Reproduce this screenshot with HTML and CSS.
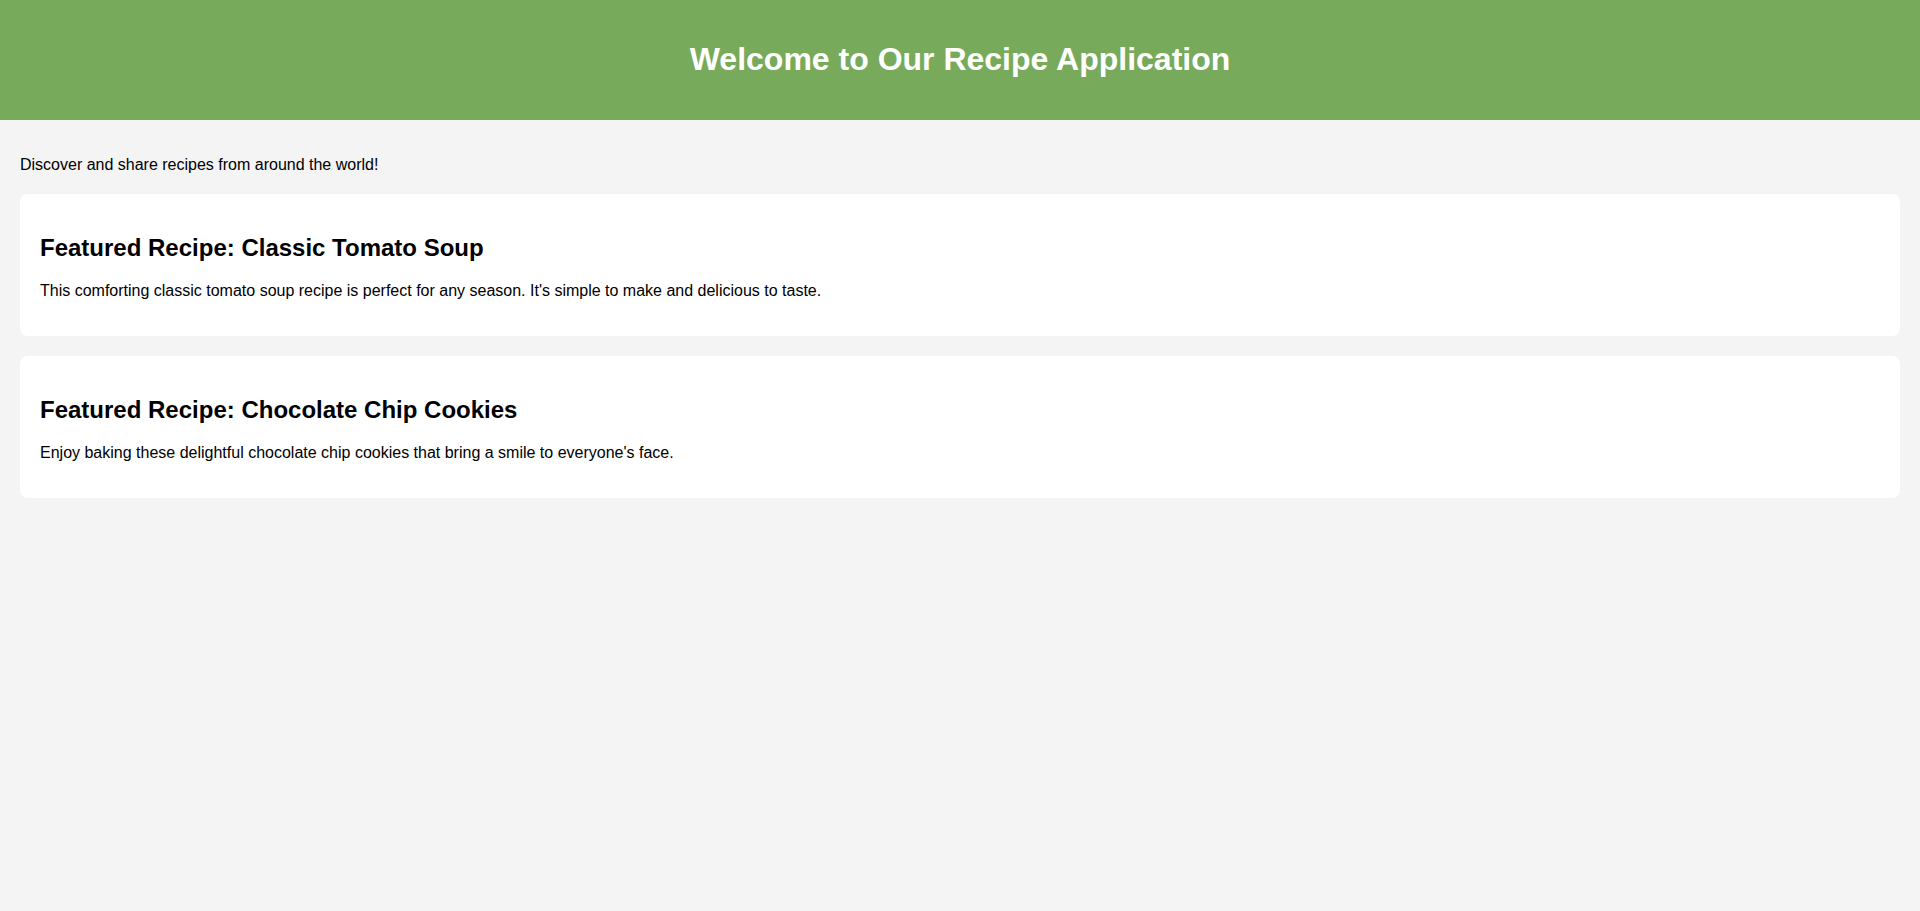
FILE: index.html
```html
<!DOCTYPE html>
<html lang="en">
<head>
<meta charset="UTF-8">
<title>Recipe Application</title>
<link rel="stylesheet" href="styles.css">
</head>
<body>
<header class="site-header">
  <h1 class="site-title">Welcome to Our Recipe Application</h1>
</header>
<main class="content">
  <p class="intro">Discover and share recipes from around the world!</p>
  <section class="recipe-card">
    <h2 class="recipe-title">Featured Recipe: Classic Tomato Soup</h2>
    <p class="recipe-desc">This comforting classic tomato soup recipe is perfect for any season. It's simple to make and delicious to taste.</p>
  </section>
  <section class="recipe-card">
    <h2 class="recipe-title">Featured Recipe: Chocolate Chip Cookies</h2>
    <p class="recipe-desc">Enjoy baking these delightful chocolate chip cookies that bring a smile to everyone's face.</p>
  </section>
</main>
</body>
</html>
```
FILE: styles.css
```css
html, body {
  margin: 0;
  padding: 0;
}
body {
  font-family: "Liberation Sans", Arial, sans-serif;
  background: #f4f4f4;
  color: #000;
}
.site-header {
  background: #78aa5c;
  color: #fff;
  padding: 20px;
  text-align: center;
}
.site-title {
  font-size: 32px;
  margin: 21.44px 0;
}
.content {
  padding: 20px;
}
.intro {
  font-size: 16px;
  margin: 16px 0;
}
.recipe-card {
  background: #fff;
  border-radius: 8px;
  padding: 20px;
  margin: 20px 0;
}
.recipe-title {
  font-size: 24px;
  margin: 19.92px 0;
}
.recipe-desc {
  font-size: 16px;
  margin: 16px 0;
}
```
